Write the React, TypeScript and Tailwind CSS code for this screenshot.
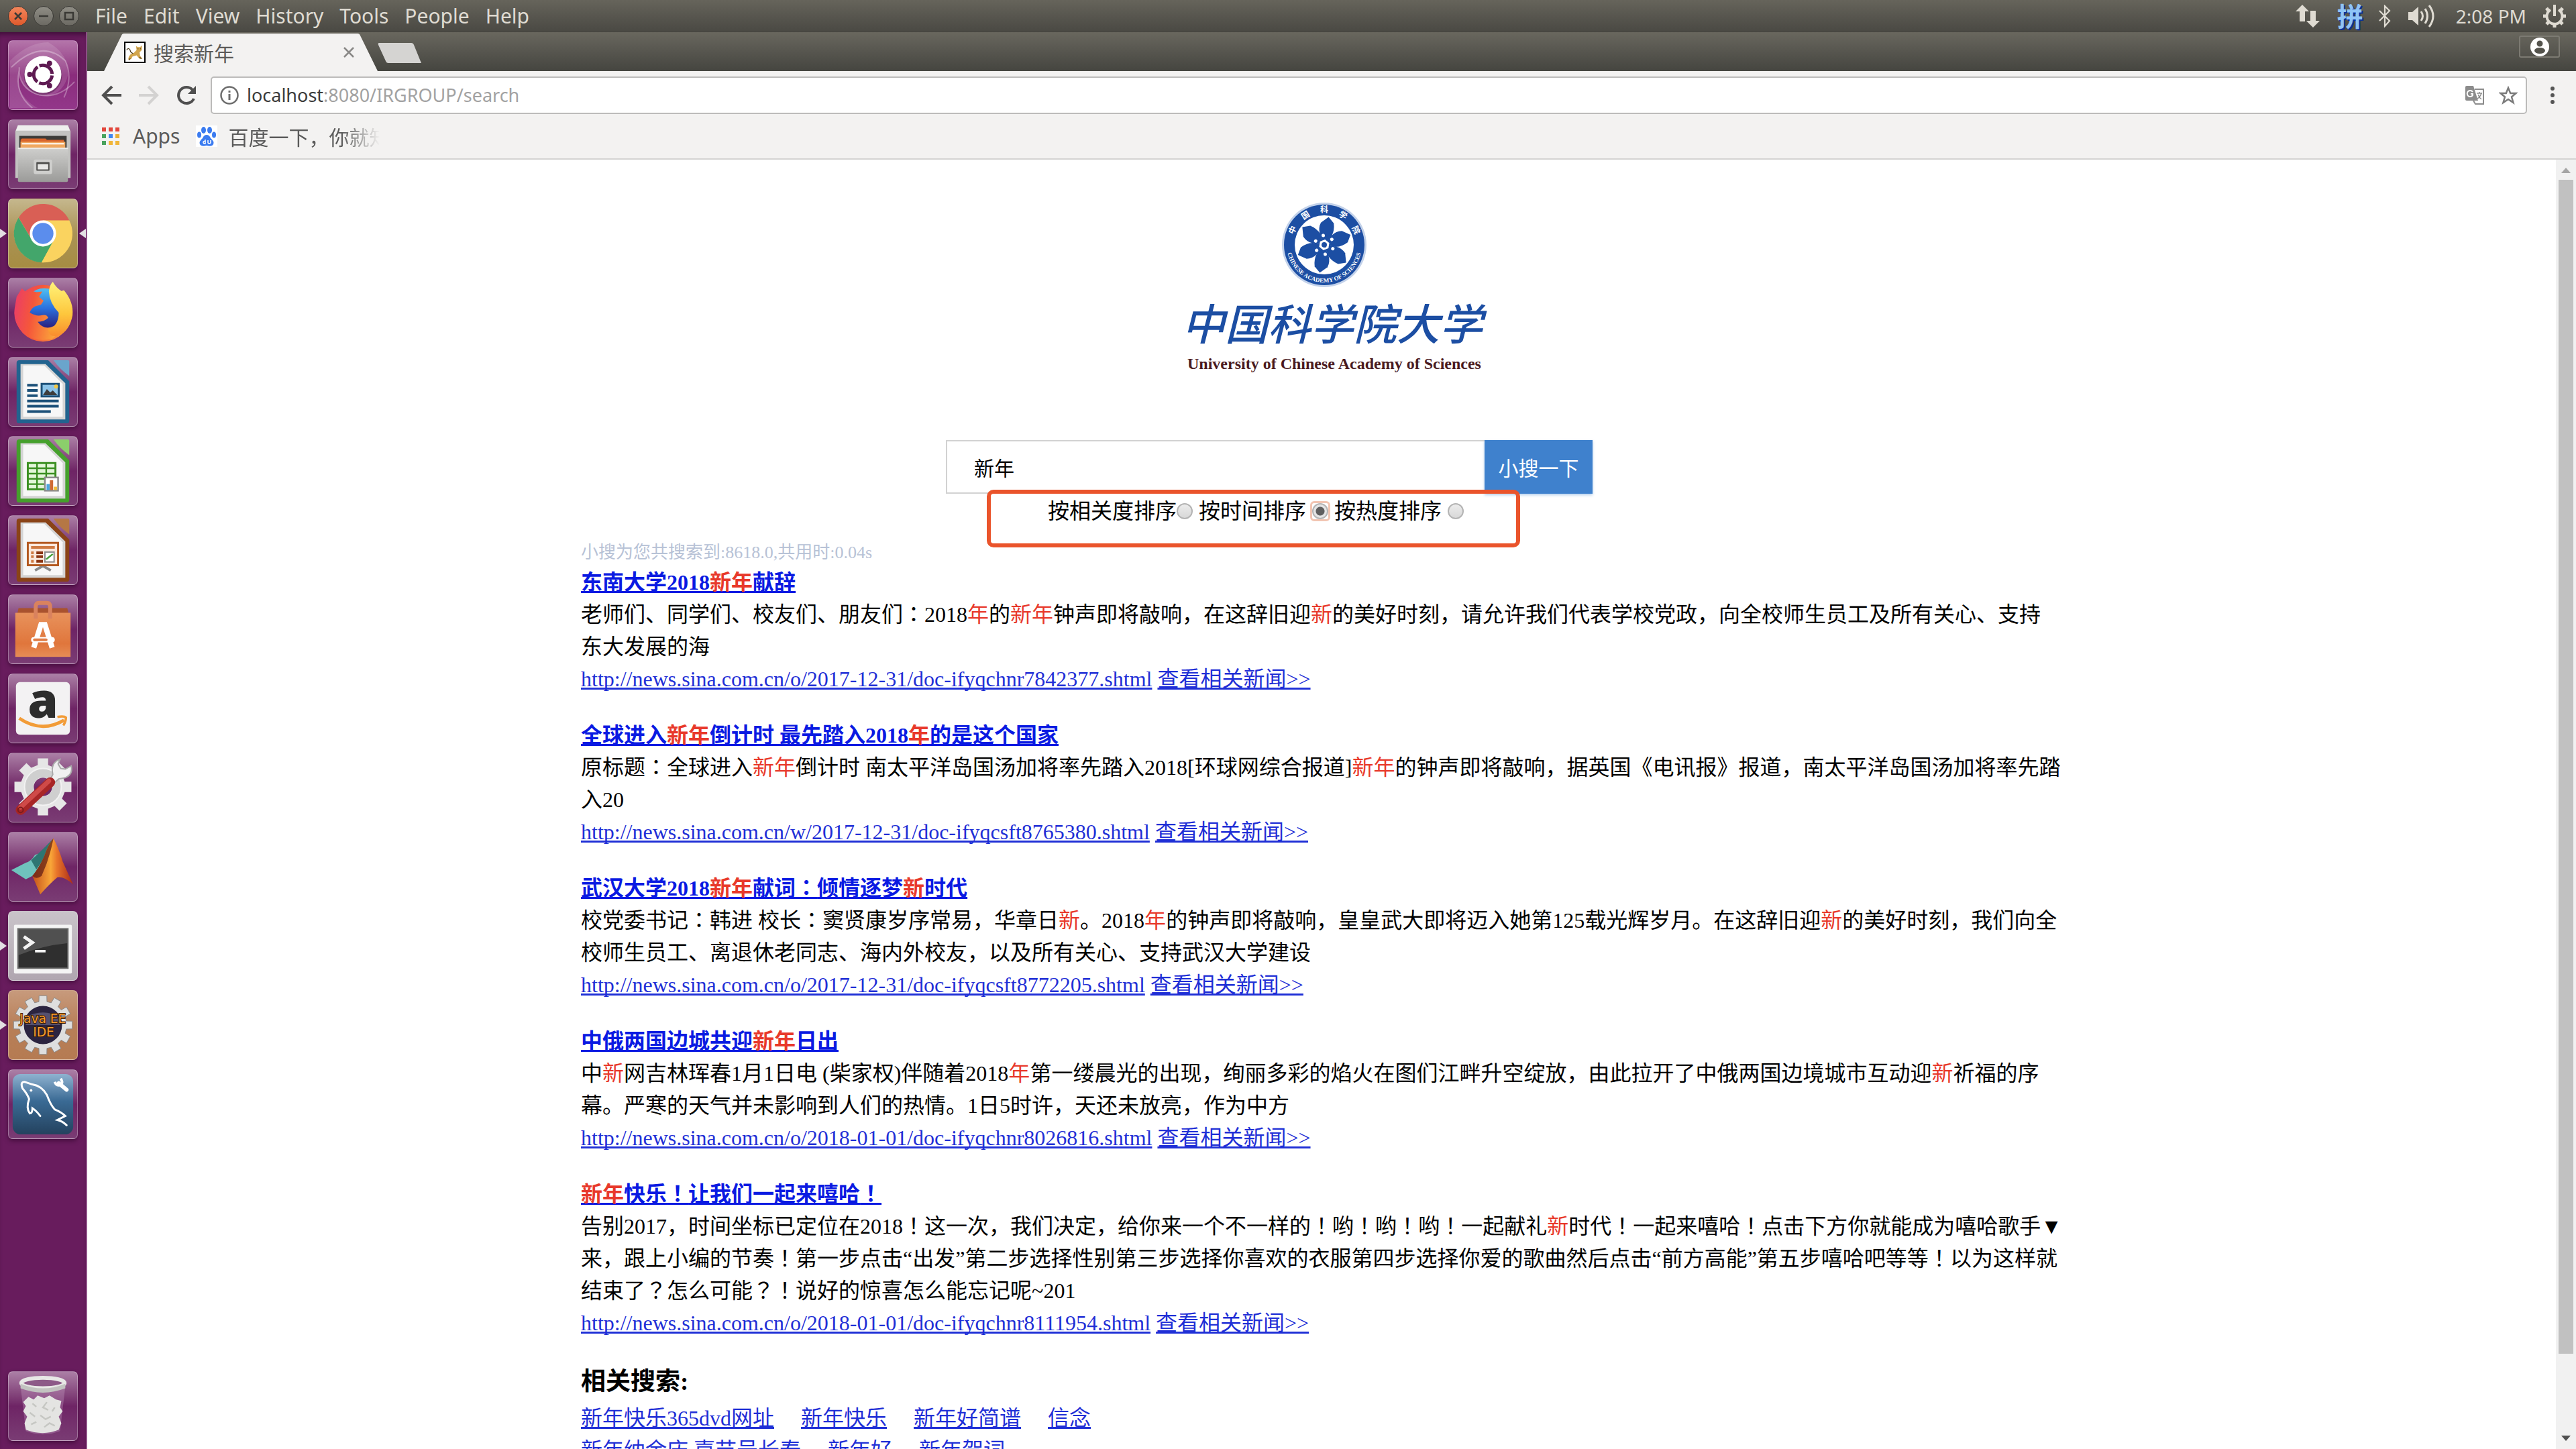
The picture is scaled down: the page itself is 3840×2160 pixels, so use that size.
import React from "react";

/* ---------- data ---------- */

type Result = { title: string; body: string; url: string };

// Words inside braces are the highlighted query terms.
const results: Result[] = [
  {
    title: "东南大学2018{新年}献辞",
    body: "老师们、同学们、校友们、朋友们：2018{年}的{新年}钟声即将敲响，在这辞旧迎{新}的美好时刻，请允许我们代表学校党政，向全校师生员工及所有关心、支持东大发展的海",
    url: "http://news.sina.com.cn/o/2017-12-31/doc-ifyqchnr7842377.shtml",
  },
  {
    title: "全球进入{新年}倒计时 最先踏入2018{年}的是这个国家",
    body: "原标题：全球进入{新年}倒计时 南太平洋岛国汤加将率先踏入2018[环球网综合报道]{新年}的钟声即将敲响，据英国《电讯报》报道，南太平洋岛国汤加将率先踏入20",
    url: "http://news.sina.com.cn/w/2017-12-31/doc-ifyqcsft8765380.shtml",
  },
  {
    title: "武汉大学2018{新年}献词：倾情逐梦{新}时代",
    body: "校党委书记：韩进 校长：窦贤康岁序常易，华章日{新}。2018{年}的钟声即将敲响，皇皇武大即将迈入她第125载光辉岁月。在这辞旧迎{新}的美好时刻，我们向全校师生员工、离退休老同志、海内外校友，以及所有关心、支持武汉大学建设",
    url: "http://news.sina.com.cn/o/2017-12-31/doc-ifyqcsft8772205.shtml",
  },
  {
    title: "中俄两国边城共迎{新年}日出",
    body: "中{新}网吉林珲春1月1日电 (柴家权)伴随着2018{年}第一缕晨光的出现，绚丽多彩的焰火在图们江畔升空绽放，由此拉开了中俄两国边境城市互动迎{新}祈福的序幕。严寒的天气并未影响到人们的热情。1日5时许，天还未放亮，作为中方",
    url: "http://news.sina.com.cn/o/2018-01-01/doc-ifyqchnr8026816.shtml",
  },
  {
    title: "{新年}快乐！让我们一起来嘻哈！",
    body: "告别2017，时间坐标已定位在2018！这一次，我们决定，给你来一个不一样的！哟！哟！哟！一起献礼{新}时代！一起来嘻哈！点击下方你就能成为嘻哈歌手▼来，跟上小编的节奏！第一步点击“出发”第二步选择性别第三步选择你喜欢的衣服第四步选择你爱的歌曲然后点击“前方高能”第五步嘻哈吧等等！以为这样就结束了？怎么可能？！说好的惊喜怎么能忘记呢~201",
    url: "http://news.sina.com.cn/o/2018-01-01/doc-ifyqchnr8111954.shtml",
  },
];

const related = [
  ["新年快乐365dvd网址", "新年快乐", "新年好简谱", "信念"],
  ["新年纳余庆 嘉节号长春", "新年好", "新年贺词"],
];

const menus = ["File", "Edit", "View", "History", "Tools", "People", "Help"];

/* ---------- text helper ---------- */

// Colon, exclamation and question marks sit centred in their cell.
function Rich({ text }: { text: string }) {
  return (
    <>
      {text.split(/(\{[^}]*\}|[：！？]+)/).map((part, i) => {
        if (part.startsWith("{"))
          return (
            <em key={i} className="not-italic text-[#e8392b]">
              {part.slice(1, -1)}
            </em>
          );
        if (/^[：！？]/.test(part))
          return (
            <span key={i} lang="ja" className="font-['Liberation_Serif','Noto_Sans_CJK_JP',serif]">
              {part}
            </span>
          );
        return part;
      })}
    </>
  );
}

/* ---------- launcher icons (104 x 104 tiles) ---------- */

function gearPath(cx: number, cy: number, teeth: number, rOut: number, rIn: number, duty: number) {
  const pts: string[] = [];
  const step = (Math.PI * 2) / teeth;
  for (let i = 0; i < teeth; i++) {
    const a = i * step - Math.PI / 2;
    const w = (step * duty) / 2;
    [
      [a - w * 1.3, rIn],
      [a - w, rOut],
      [a + w, rOut],
      [a + w * 1.3, rIn],
    ].forEach(([t, r]) => pts.push(`${(cx + r * Math.cos(t)).toFixed(1)},${(cy + r * Math.sin(t)).toFixed(1)}`));
  }
  return `M${pts.join("L")}Z`;
}

const DashIcon = (
  <g>
    <path d="M4 40Q50-4 86 30Q98 56 84 86" fill="none" stroke="#fff" strokeOpacity=".3" strokeWidth="2" />
    <path d="M60 2Q92 20 90 52Q84 78 60 84Q30 84 20 62Q12 40 30 24Q12 44 16 70Q22 90 44 102H2V30Q30 2 60 2Z" fill="#fff" fillOpacity=".13" />
    <path d="M100 62Q76 88 46 82Q14 72 16 40M36 102Q8 80 16 44" fill="none" stroke="#fff" strokeOpacity=".3" strokeWidth="2" />
    <circle cx="52" cy="53" r="29" fill="#3c0f36" fillOpacity=".35" />
    <circle cx="52" cy="51" r="28" fill="#fff" />
    <circle cx="52" cy="51" r="14" fill="none" stroke="#5e1a52" strokeWidth="5" strokeDasharray="26.3 3" strokeDashoffset="-1.5" />
    <circle cx="32" cy="51" r="4" fill="#5e1a52" />
    <circle cx="62" cy="34" r="4" fill="#5e1a52" />
    <circle cx="62" cy="68" r="4" fill="#5e1a52" />
  </g>
);

const FilesIcon = (
  <g>
    <path d="M14 8H90L94 17V88H10V17Z" fill="#c3c3c1" />
    <path d="M14 8H90L93 16H11Z" fill="#efefee" />
    <rect x="16" y="24" width="72" height="20" fill="#3c3b38" />
    <path d="M20 28H56L58 30H84V44H18V30Z" fill="#d9652c" />
    <rect x="18" y="33" width="68" height="11" fill="#f0a860" />
    <rect x="20" y="35" width="64" height="2" fill="#fff" />
    <rect x="14" y="42" width="76" height="52" rx="2" fill="url(#silver)" />
    <rect x="14" y="42" width="76" height="2" fill="#ececea" />
    <rect x="38" y="60" width="28" height="22" rx="3" fill="#cfcfcd" />
    <rect x="42" y="64" width="20" height="13" rx="1" fill="#4f4f4d" />
    <rect x="44" y="67" width="16" height="8" fill="#e8e8e6" />
  </g>
);

const ChromeIcon = (
  <g>
    <circle cx="52" cy="52" r="44" fill="#fad35f" />
    <path d="M52 52L92 32A44 44 0 0 0 15 28L33 58Z" fill="#d95f55" />
    <path d="M15 28A44 44 0 0 0 50 96L68 63L52 72L34 60Z" fill="#43a66b" />
    <path d="M52 32H92A44 44 0 0 1 50 96L69 62Z" fill="#fad35f" />
    <circle cx="52" cy="52" r="20" fill="#fff" />
    <circle cx="52" cy="52" r="16" fill="#5b8ded" />
  </g>
);

const FirefoxIcon = (
  <g>
    <circle cx="52" cy="53" r="43" fill="url(#fffox)" />
    <circle cx="54" cy="46" r="31" fill="url(#ffglobe)" />
    <path d="M9 46L12 28L20 15L27 22Q32 17 42 21L51 20L46 28L53 34L49 40L41 42Q34 45 32 52Q42 58 50 56Q58 54 60 60Q54 66 44 66Q54 80 70 72Q80 82 66 92Q36 98 20 80Q6 66 9 46Z" fill="url(#fffox)" />
    <path d="M67 5Q72 14 80 19L84 18Q99 36 97 56Q93 78 78 86Q62 92 60 78Q76 72 76 52Q62 38 61 20Q62 10 67 5Z" fill="url(#fftail)" />
  </g>
);

function OfficeFrame({ dark, light, children }: { dark: string; light: string; children: React.ReactNode }) {
  return (
    <g>
      <path d="M16 4H60L92 36V96Q92 100 88 100H16Q12 100 12 96V8Q12 4 16 4Z" fill={dark} />
      <path d="M68 4H90Q92 4 92 6V28Q78 18 68 4Z" fill={light} />
      <path d="M18 10H56L86 39V94H18Z" fill="#d4d4d4" />
      <path d="M22 12H54L82 40V90H22Z" fill="#f7f7f7" />
      {children}
    </g>
  );
}

const WriterIcon = (
  <OfficeFrame dark="#22638f" light="#6aa5cc">
    <path d="M28 42H44M28 50H44M28 58H44M28 66H76M28 74H76M28 82H64" stroke="#1c5078" strokeWidth="4" />
    <rect x="50" y="40" width="26" height="19" fill="#8cc4e8" stroke="#1c5078" strokeWidth="3" />
    <path d="M52 57L58 48L63 53L67 50L74 57Z" fill="#3d3d3d" />
    <circle cx="72" cy="44" r="3" fill="#f2c844" />
  </OfficeFrame>
);

const CalcIcon = (
  <OfficeFrame dark="#45a02c" light="#8bcf6b">
    <rect x="29" y="40" width="42" height="40" fill="#e2f6d8" stroke="#3b8f22" strokeWidth="3" />
    <path d="M29 48H71M29 56H71M29 64H71M29 72H71M43 40V80M57 40V80" stroke="#3b8f22" strokeWidth="2.5" />
    <rect x="55" y="62" width="20" height="20" fill="#fff" stroke="#8a8a8a" strokeWidth="2.5" />
    <path d="M60 81V72" stroke="#4ba6df" strokeWidth="5" />
    <path d="M65 81V66" stroke="#cf6b34" strokeWidth="5" />
    <path d="M71 81V76" stroke="#f0bd3a" strokeWidth="5" />
  </OfficeFrame>
);

const ImpressIcon = (
  <OfficeFrame dark="#8a4317" light="#b57745">
    <path d="M40 83L52 76L64 83" fill="none" stroke="#8a8a8a" strokeWidth="4" />
    <rect x="29" y="41" width="46" height="34" fill="#fbe9dd" stroke="#b3581f" strokeWidth="3" />
    <path d="M34 48H70" stroke="#cf7a42" strokeWidth="4" />
    <path d="M34 56H38M34 62H38M34 69H38" stroke="#cf7a42" strokeWidth="4" />
    <path d="M42 56H52M42 62H52M42 69H52" stroke="#8a3410" strokeWidth="4" />
    <rect x="55" y="55" width="14" height="15" fill="#fff" stroke="#8a8a8a" strokeWidth="2" />
    <path d="M57 66L62 62L67 58" fill="none" stroke="#47a23a" strokeWidth="2.5" />
  </OfficeFrame>
);

const SoftwareIcon = (
  <g>
    <path d="M15 20H89L91 28H13Z" fill="#a9522e" />
    <rect x="10" y="27" width="84" height="67" fill="url(#bag)" />
    <path d="M41 36V18Q41 12 46 12H58Q63 12 63 18V36" fill="none" stroke="#d9825e" strokeWidth="6" />
    <path d="M38 80L49 45H55L66 80" fill="none" stroke="#fff" strokeWidth="8" />
    <rect x="34" y="64" width="36" height="8" rx="4" fill="#fff" />
    <rect x="37" y="66" width="22" height="4" rx="2" fill="#e07d46" />
  </g>
);

const AmazonIcon = (
  <g>
    <rect x="11" y="12" width="82" height="80" rx="6" fill="#f3f2f3" />
    <text x="52" y="66" textAnchor="middle" fontSize="74" fontWeight="800" fill="#2d2d2d" className="font-['Open_Sans',sans-serif]">
      a
    </text>
    <path d="M16 67Q50 90 84 70" fill="none" stroke="#f29c38" strokeWidth="5" />
    <path d="M74 65Q84 63 87 66Q87 72 83 78" fill="none" stroke="#f29c38" strokeWidth="3.5" />
  </g>
);

const SettingsIcon = (
  <g>
    <path d={`${gearPath(52, 51, 8, 44, 34, 0.46)}M52 37a14 14 0 1 0 .1 0Z`} fill="#e6e6e6" fillRule="evenodd" />
    <circle cx="52" cy="51" r="21" fill="none" stroke="#cfcfcf" strokeWidth="13" />
    <circle cx="52" cy="51" r="28" fill="none" stroke="#f2f2f2" strokeWidth="2" />
    <path d="M62 42L67 32Q63 14 78 9L75 16L79 23L86 24L95 19Q98 32 86 37L76 39L68 46Z" fill="#f0f0f0" stroke="#a9a9a9" strokeWidth="2" />
    <path d="M63 44L18 86" stroke="#a82626" strokeWidth="15" strokeLinecap="round" />
    <path d="M61 42L18 82" stroke="#cf4a48" strokeWidth="7" strokeLinecap="round" />
    <circle cx="18" cy="86" r="4" fill="none" stroke="#7c1c1c" strokeWidth="2" />
  </g>
);

const MatlabIcon = (
  <g>
    <path d="M4 57L26 46Q34 44 40 34Q52 32 68 9L56 38L44 58L36 66L26 71Z" fill="#6fc3bd" />
    <path d="M34 42Q50 28 68 9L52 42L42 56Z" fill="#2e7672" />
    <path d="M36 66Q46 54 54 36Q60 18 68 9Q76 24 82 44Q90 62 98 79Q84 66 74 68Q62 78 48 94Q42 80 36 66Z" fill="url(#matlab)" />
    <path d="M36 66Q46 54 54 36Q60 18 68 9Q62 40 50 66Q42 72 36 66Z" fill="#5c1a12" fillOpacity=".7" />
  </g>
);

const TerminalIcon = (
  <g>
    <rect x="8" y="20" width="88" height="74" rx="2" fill="#f4f4f4" />
    <rect x="14" y="26" width="76" height="60" fill="#2f2f2f" stroke="#6b6b6b" strokeWidth="2" />
    <path d="M15 27H89V48Q50 52 15 66Z" fill="#fff" fillOpacity=".16" />
    <path d="M23 38L36 47L23 56" fill="none" stroke="#f4f4f4" strokeWidth="5" />
    <path d="M40 60H56" stroke="#f4f4f4" strokeWidth="4" />
  </g>
);

const JavaEEIcon = (
  <g>
    <path d={gearPath(52, 52, 12, 45, 36, 0.5)} fill="#dedede" stroke="#8a8a8a" strokeWidth="1" />
    <circle cx="52" cy="52" r="29" fill="#2b2440" />
    <path d="M26 40Q52 26 78 40V52H26Z" fill="#55506e" />
    <g fill="#f29a2e" stroke="#3a1c05" strokeWidth="2" paintOrder="stroke" textAnchor="middle" className="font-['DejaVu_Sans',sans-serif]">
      <text x="52" y="49" fontSize="19">
        Java EE
      </text>
      <text x="53" y="69" fontSize="19">
        IDE
      </text>
    </g>
  </g>
);

const MysqlIcon = (
  <g>
    <rect x="6" y="6" width="92" height="92" rx="12" fill="url(#mysql)" />
    <path d="M21 28Q17 18 24 18Q30 20 36 22Q50 24 58 38Q64 54 70 60Q80 64 86 70L74 76Q82 78 88 84M21 28Q28 36 31 44Q26 58 32 66Q36 66 36 58Q42 62 48 70" fill="none" stroke="#fff" strokeWidth="3" strokeLinecap="round" />
    <circle cx="34" cy="31" r="2" fill="#fff" />
    <path d="M76 20L88 30" stroke="#fff" strokeWidth="6" strokeLinecap="round" />
    <path d="M79 13Q84 21 77 23Q72 24 70 18" fill="none" stroke="#fff" strokeWidth="4" />
  </g>
);

const TrashIcon = (
  <g>
    <path d="M18 22L26 90Q52 100 78 90L86 22Z" fill="#d9b8d6" fillOpacity=".28" />
    <path d="M22 46L30 38L38 42L44 36L54 40L62 36L72 42L80 44L78 54L82 60L76 68L80 78L76 88Q52 98 26 88L24 78L28 68L22 60L26 52Z" fill="#e4e4e2" />
    <path d="M36 48L42 53M58 46L52 54L60 58M70 54L66 60M32 62L40 68M48 66L56 72L64 68M34 80L42 76M54 84L62 78L70 82" fill="none" stroke="#c6c7c3" strokeWidth="2.5" />
    <ellipse cx="52" cy="17" rx="33" ry="8" fill="#8d5a88" stroke="#e8e8e6" strokeWidth="6" />
    <path d="M18 18V25Q52 38 86 25V18Q52 32 18 18Z" fill="#c2c3c0" />
  </g>
);

type App = { name: string; icon: React.ReactNode; tile: string; pip?: boolean; active?: boolean };

const plainTile = "bg-linear-to-b from-[#ab7fa6] via-[#6e2465] to-[#7a3c74]";

const apps: App[] = [
  { name: "Dash", icon: DashIcon, tile: "bg-linear-to-b from-[#b475aa] via-[#8a2c7c] to-[#93378a]" },
  { name: "Files", icon: FilesIcon, tile: plainTile },
  { name: "Google Chrome", icon: ChromeIcon, tile: "bg-linear-to-b from-[#c5b78d] via-[#aa9355] to-[#a68c42]", pip: true, active: true },
  { name: "Firefox", icon: FirefoxIcon, tile: plainTile },
  { name: "LibreOffice Writer", icon: WriterIcon, tile: plainTile },
  { name: "LibreOffice Calc", icon: CalcIcon, tile: plainTile },
  { name: "LibreOffice Impress", icon: ImpressIcon, tile: plainTile },
  { name: "Ubuntu Software", icon: SoftwareIcon, tile: plainTile },
  { name: "Amazon", icon: AmazonIcon, tile: plainTile },
  { name: "System Settings", icon: SettingsIcon, tile: plainTile },
  { name: "MATLAB", icon: MatlabIcon, tile: plainTile },
  { name: "Terminal", icon: TerminalIcon, tile: "bg-linear-to-b from-[#c9c3c9] via-[#bdb5bd] to-[#b0a6b0]", pip: true },
  { name: "Java EE IDE", icon: JavaEEIcon, tile: "bg-linear-to-b from-[#c79a7c] via-[#b87f58] to-[#b57b52]", pip: true },
  { name: "MySQL Workbench", icon: MysqlIcon, tile: plainTile },
];

function Tile({ app }: { app: App }) {
  return (
    <div className="relative flex w-full shrink-0 pl-3">
      {app.pip && (
        <svg viewBox="0 0 10 14" className="absolute left-0 top-[45px] h-[14px] w-[10px]" aria-hidden="true">
          <path d="M0 0L10 7L0 14Z" fill="#e3dfe3" />
        </svg>
      )}
      <button
        type="button"
        aria-label={app.name}
        className={`size-[104px] overflow-hidden rounded-[7px] border border-white/30 shadow-[0_3px_6px_rgba(40,0,35,0.5)] ${app.tile}`}
      >
        <svg viewBox="0 0 104 104" className="size-full" aria-hidden="true">
          {app.icon}
        </svg>
      </button>
      {app.active && (
        <svg viewBox="0 0 10 14" className="absolute right-0 top-[45px] h-[14px] w-[10px]" aria-hidden="true">
          <path d="M10 0L0 7L10 14Z" fill="#e3dfe3" />
        </svg>
      )}
    </div>
  );
}

function Gradients() {
  return (
    <svg className="absolute size-0" aria-hidden="true">
      <defs>
        <linearGradient id="silver" x1="0" y1="0" x2="0" y2="1">
          <stop offset="0" stopColor="#cfcfcd" />
          <stop offset="1" stopColor="#9b9b99" />
        </linearGradient>
        <linearGradient id="ffglobe" x1="0" y1="0" x2="0" y2="1">
          <stop offset="0" stopColor="#4fc0f2" />
          <stop offset=".5" stopColor="#2a6fdc" />
          <stop offset="1" stopColor="#2b1a78" />
        </linearGradient>
        <linearGradient id="fffox" x1="0" y1=".4" x2="1" y2=".6">
          <stop offset="0" stopColor="#ec3f63" />
          <stop offset=".4" stopColor="#f5573a" />
          <stop offset="1" stopColor="#fba63a" />
        </linearGradient>
        <linearGradient id="fftail" x1="0" y1="0" x2="0" y2="1">
          <stop offset="0" stopColor="#fff37a" />
          <stop offset=".6" stopColor="#fdc63c" />
          <stop offset="1" stopColor="#f98c2e" />
        </linearGradient>
        <linearGradient id="bag" x1="0" y1="0" x2="0" y2="1">
          <stop offset="0" stopColor="#e8925c" />
          <stop offset=".7" stopColor="#e0763c" />
          <stop offset="1" stopColor="#e68c56" />
        </linearGradient>
        <linearGradient id="matlab" x1="0" y1="0" x2="1" y2="0">
          <stop offset="0" stopColor="#c4501c" />
          <stop offset=".45" stopColor="#f8a638" />
          <stop offset=".6" stopColor="#e8752a" />
          <stop offset="1" stopColor="#a82818" />
        </linearGradient>
        <linearGradient id="mysql" x1="0" y1="0" x2="0" y2="1">
          <stop offset="0" stopColor="#8fb2d0" />
          <stop offset=".45" stopColor="#3a6a94" />
          <stop offset="1" stopColor="#24425e" />
        </linearGradient>
      </defs>
    </svg>
  );
}

function Launcher() {
  return (
    <nav
      aria-label="Launcher"
      className="flex w-[130px] shrink-0 flex-col gap-[14px] border-r-2 border-[#8d4f86] bg-[#681c5d] pb-3 pt-3 shadow-[inset_0_8px_10px_-6px_rgba(30,0,28,0.7)]"
    >
      {apps.map((a) => (
        <Tile key={a.name} app={a} />
      ))}
      <div className="mt-auto">
        <Tile app={{ name: "Trash", icon: TrashIcon, tile: plainTile }} />
      </div>
    </nav>
  );
}

/* ---------- top bar ---------- */

function WindowButton({ label, className, d }: { label: string; className: string; d: string }) {
  return (
    <button type="button" aria-label={label} className={`size-[30px] rounded-full border border-[#3b3a36] ${className}`}>
      <svg viewBox="0 0 28 28" className="size-full" aria-hidden="true">
        <path d={d} fill="none" stroke="#3a3935" strokeWidth="2.5" />
      </svg>
    </button>
  );
}

function TopBar() {
  return (
    <header className="flex h-12 shrink-0 items-center border-b border-[#45443f] bg-linear-to-b from-[#66645b] to-[#4a4943] pl-3 pr-[14px] text-[#dfdbd2] font-['Noto_Sans',sans-serif]">
      <div className="flex gap-2">
        <WindowButton label="Close window" className="bg-linear-to-b from-[#f2865b] to-[#e0592b]" d="M9 9L19 19M19 9L9 19" />
        <WindowButton label="Minimize window" className="bg-linear-to-b from-[#8f8d85] to-[#6c6a63]" d="M7 14H21" />
        <WindowButton label="Restore window" className="bg-linear-to-b from-[#8f8d85] to-[#6c6a63]" d="M8 9H20V19H8Z" />
      </div>
      <div className="ml-6 flex gap-6 text-[30px] leading-[40px]">
        {menus.map((m) => (
          <button key={m} type="button">
            {m}
          </button>
        ))}
      </div>
      <div className="ml-auto flex items-center">
        <svg viewBox="0 0 36 36" className="size-9" aria-label="Network" fill="#dfdbd2">
          <path d="M10 1L20 11H14V26H6V11H0Z" />
          <path d="M26 35L36 25H30V10H22V25H16Z" />
        </svg>
        <span className="mb-1 ml-[26px] text-[39px] font-bold leading-[40px] text-[#8fc4f7] [text-shadow:2px_2px_0_#0b2f9a] font-['Noto_Sans_CJK_SC',sans-serif]">
          拼
        </span>
        <svg viewBox="0 0 18 34" className="ml-[23px] h-[34px] w-[18px]" aria-label="Bluetooth" fill="none" stroke="#dfdbd2" strokeWidth="2.2">
          <path d="M1 9L16 24L9 32V2L16 9L1 24" />
        </svg>
        <svg viewBox="0 0 41 36" className="ml-[26px] h-9 w-[41px]" aria-label="Volume" fill="none" stroke="#dfdbd2" strokeWidth="3">
          <path d="M0 12H6L15 4V32L6 24H0Z" fill="#dfdbd2" stroke="none" />
          <path d="M19 11Q24 18 19 25M25 7Q32 18 25 29M31 2Q43 18 31 34" />
        </svg>
        <span className="ml-[30px] text-[28px] leading-[40px]">2:08 PM</span>
        <svg viewBox="0 0 36 36" className="ml-[24px] size-9" aria-label="System" fill="none" stroke="#dfdbd2">
          <path d="M12 8.500A11.500 11.500 0 1 0 24 8.500" strokeWidth="4" />
          <path d="M18 1V18" strokeWidth="4" />
          <path d="M7 18H1M35 18H29M10 26L6 30M26 26L30 30M18 30V35M9 10L6 6M27 10L30 6" strokeWidth="5" />
        </svg>
      </div>
    </header>
  );
}

/* ---------- browser chrome ---------- */

function CatFavicon() {
  return (
    <svg viewBox="0 0 32 32" className="size-8 border-2 border-black bg-white" aria-hidden="true">
      <path d="M5 26Q7 18 14 17L19 12L18 5L21 7H25L28 4L28 12L24 16L25 22L29 27H24L19 21L12 23L10 27L5 29Z" fill="#d2a54c" />
      <path d="M2 12Q5 7 8 12Q8 16 13 18M8 26L7 29M24 24L27 27M21 10H22M25 10H26" stroke="#4a3a1c" strokeWidth="1.500" fill="none" />
    </svg>
  );
}

function TabStrip() {
  return (
    <div className="flex h-[58px] shrink-0 items-end justify-between bg-linear-to-b from-[#69675e] to-[#454540] pl-[25px] pr-6">
      <div className="flex items-end">
        <div className="relative flex h-14 w-[408px] items-center pl-[30px] pr-[34px]">
          <svg viewBox="0 0 408 56" className="absolute inset-0 size-full" aria-hidden="true">
            <path d="M0 56L26 3Q27 0 30 0H378Q381 0 382 3L408 56Z" fill="#f3f2f1" />
          </svg>
          <span className="relative flex min-w-0 flex-1 items-center gap-3">
            <CatFavicon />
            <span className="text-[30px] leading-10 text-[#5c5b59] font-['Noto_Sans_CJK_SC',sans-serif]">搜索新年</span>
          </span>
          <button type="button" aria-label="Close tab" className="relative">
            <svg viewBox="0 0 18 18" className="size-[18px]" aria-hidden="true">
              <path d="M2 2L16 16M16 2L2 16" stroke="#8a8987" strokeWidth="2.500" />
            </svg>
          </button>
        </div>
        <button type="button" aria-label="New tab" className="mb-3">
          <svg viewBox="0 0 66 30" className="h-[30px] w-[66px]" aria-hidden="true">
            <path d="M2 0H50Q53 0 54 3L65 30H16Q13 30 12 27L1 3Q0 0 2 0Z" fill="#d5d4d2" />
          </svg>
        </button>
      </div>
      <button type="button" aria-label="Profile" className="mb-5 flex h-[33px] w-[61px] items-center justify-center rounded-[3px] border-2 border-[#7c7a72]">
        <svg viewBox="0 0 28 28" className="size-[28px]" aria-hidden="true">
          <circle cx="14" cy="14" r="14" fill="#fff" />
          <circle cx="14" cy="9" r="4.500" fill="#54534c" />
          <ellipse cx="14" cy="19.500" rx="8" ry="4.500" fill="#54534c" />
        </svg>
      </button>
    </div>
  );
}

function Toolbar() {
  return (
    <div className="flex shrink-0 items-center pl-[21px] pr-[25px] pt-2">
      <div className="flex items-center gap-[26px]">
        <button type="button" aria-label="Back">
          <svg viewBox="0 0 30 30" className="size-[30px]" fill="none" stroke="#4f4f4f" strokeWidth="4" aria-hidden="true">
            <path d="M30 15H3M16 2L3 15L16 28" />
          </svg>
        </button>
        <button type="button" aria-label="Forward" disabled>
          <svg viewBox="0 0 30 30" className="size-[30px]" fill="none" stroke="#d3d2d1" strokeWidth="4" aria-hidden="true">
            <path d="M0 15H27M14 2L27 15L14 28" />
          </svg>
        </button>
        <button type="button" aria-label="Reload">
          <svg viewBox="0 0 30 30" className="size-[30px]" aria-hidden="true">
            <path d="M26 20A12 12 0 1 1 24 7" fill="none" stroke="#4f4f4f" strokeWidth="4" />
            <path d="M29 1V13H17Z" fill="#4f4f4f" />
          </svg>
        </button>
      </div>
      <div className="ml-[21px] flex h-14 min-w-0 flex-1 items-center rounded-[5px] border-2 border-[#bcbbba] bg-white pl-3 pr-3 text-[27px] leading-10 text-[#a2a2a2] font-['Noto_Sans',sans-serif]">
        <svg viewBox="0 0 28 28" className="size-7 shrink-0" aria-hidden="true">
          <circle cx="14" cy="14" r="12.500" fill="none" stroke="#6d6d6d" strokeWidth="2.500" />
          <path d="M14 12V21M14 7V10" stroke="#6d6d6d" strokeWidth="3" />
        </svg>
        <label htmlFor="address" className="ml-3 text-[#3b3b3b]">
          localhost
        </label>
        <input id="address" type="text" defaultValue=":8080/IRGROUP/search" className="min-w-0 flex-1 bg-transparent outline-none" />
        <button type="button" aria-label="Translate" className="mr-[22px]">
          <svg viewBox="0 0 28 28" className="size-7" aria-hidden="true">
            <path d="M14 5H27V27H15L12 22" fill="#fff" stroke="#8c8c8c" strokeWidth="2" />
            <path d="M2 0H12L19 22H2Q0 22 0 20V2Q0 0 2 0Z" fill="#8c8c8c" />
            <path d="M11 9A4.500 4.500 0 1 0 11 14V12H8" fill="none" stroke="#fff" strokeWidth="2" />
            <path d="M17 11H25M21 9V11M24 11Q22 17 18 19M19 13Q21 18 24 20" fill="none" stroke="#8c8c8c" strokeWidth="1.500" />
          </svg>
        </button>
        <button type="button" aria-label="Bookmark this page">
          <svg viewBox="0 0 28 28" className="size-7" aria-hidden="true">
            <path d="M14 3L17.200 11H25.500L19 16.500L21.500 25L14 20L6.500 25L9 16.500L2.500 11H10.800Z" fill="none" stroke="#7a7a7a" strokeWidth="2.500" />
          </svg>
        </button>
      </div>
      <button type="button" aria-label="Menu" className="ml-[28px]">
        <svg viewBox="0 0 20 28" className="h-7 w-5" fill="#545454" aria-hidden="true">
          <circle cx="10" cy="4" r="3" />
          <circle cx="10" cy="14" r="3" />
          <circle cx="10" cy="24" r="3" />
        </svg>
      </button>
    </div>
  );
}

const appDots = ["#e2473c", "#e2473c", "#e2473c", "#4aa35e", "#3f86f0", "#e9ae35", "#4aa35e", "#f0b63a", "#f0b63a"];

function BookmarksBar() {
  return (
    <div className="flex h-[68px] shrink-0 items-center border-b-2 border-[#d4d3d2] pl-[22px] text-[#5a5a5a]">
      <a href="#apps" className="flex items-center">
        <span className="grid grid-cols-3 gap-1">
          {appDots.map((c, i) => (
            <span key={i} className="size-[6px]" style={{ backgroundColor: c }} />
          ))}
        </span>
        <span className="ml-5 text-[30px] leading-10 font-['Noto_Sans',sans-serif]">Apps</span>
      </a>
      <a href="#baidu" className="ml-6 flex items-center">
        <svg viewBox="0 0 32 32" className="size-8 bg-white" fill="#3a7bf0" aria-hidden="true">
          <ellipse cx="11.500" cy="7" rx="3.500" ry="5" />
          <ellipse cx="20.500" cy="7" rx="3.500" ry="5" />
          <ellipse cx="5" cy="14" rx="3" ry="4.500" />
          <ellipse cx="27" cy="14" rx="3" ry="4.500" />
          <path d="M16 14Q20 14 22 19Q28 24 26 28Q24 32 16 30Q8 32 6 28Q4 24 10 19Q12 14 16 14Z" />
          <path d="M14 21V27H12Q9 24 14 23M18 22V26Q20 28 22 26V22" fill="none" stroke="#fff" strokeWidth="1.500" />
        </svg>
        <span className="ml-4 w-[226px] overflow-hidden whitespace-nowrap text-[30px] leading-10 font-['Noto_Sans_CJK_SC',sans-serif] [mask-image:linear-gradient(to_right,black_75%,transparent_100%)]">
          百度一下，你就知
        </span>
      </a>
    </div>
  );
}

/* ---------- page ---------- */

function UniversityLogo() {
  return (
    <svg viewBox="0 0 500 300" className="h-[300px] w-[500px]" role="img" aria-label="中国科学院大学 University of Chinese Academy of Sciences">
      <defs>
        <path id="ring-top" d="M206 75A48 48 0 0 1 302 75" />
        <path id="ring-bottom" d="M198 75A56 56 0 0 0 310 75" />
      </defs>
      <circle cx="254" cy="75" r="63" fill="#c3d2ea" />
      <circle cx="254" cy="75" r="60" fill="#1c4ea3" />
      <circle cx="254" cy="75" r="44" fill="#fff" />
      <g transform="translate(254 75) rotate(9)" fill="#1c4ea3">
        {[0, 60, 120, 180, 240, 300].map((a) => (
          <path key={a} d="M0 0L-9 -15Q-13 -24 -10 -32L0 -42L9 -34Q12 -24 9 -15Z" transform={`rotate(${a})`} />
        ))}
        <path d="M0 -8L7 -4V4L0 8L-7 4V-4Z" fill="#fff" />
        <circle r="4" />
        {[0, 60, 120, 180, 240, 300].map((a) => (
          <circle key={a} cx="0" cy="-14" r="2.500" fill="#fff" transform={`rotate(${a - 15})`} />
        ))}
      </g>
      <g fill="#fff" fontSize="12" fontWeight="700" textAnchor="middle">
        {[..."中国科学院"].map((c, i) => (
          <text key={c} fontSize="12" className="font-['Noto_Sans_CJK_SC',sans-serif]">
            <textPath href="#ring-top" startOffset={`${14 + i * 18}%`}>
              {c}
            </textPath>
          </text>
        ))}
        <text fontSize="9" className="font-['Liberation_Serif',serif]">
          <textPath href="#ring-bottom" startOffset="50%">
            CHINESE ACADEMY OF SCIENCES
          </textPath>
        </text>
      </g>
      <text x="266" y="217" textAnchor="middle" fontSize="64" fontWeight="500" fontStyle="italic" fill="#1c4ea3" className="font-['Noto_Sans_CJK_SC',sans-serif]">
        中国科学院大学
      </text>
      <text x="269" y="260" textAnchor="middle" fontSize="24" fontWeight="700" fill="#4a1a1e" className="font-['Liberation_Serif',serif]">
        University of Chinese Academy of Sciences
      </text>
    </svg>
  );
}

function SortOption({ id, label, tight, checked }: { id: string; label: string; tight?: boolean; checked?: boolean }) {
  return (
    <span className={tight ? "flex items-center" : "flex items-center gap-[9px]"}>
      <label htmlFor={id}>{label}</label>
      <span className="flex rounded-[3px] has-checked:outline-3 has-checked:outline-[#f2c5b2]">
        <input
          id={id}
          type="radio"
          name="sort"
          defaultChecked={checked}
          className="size-6 appearance-none rounded-full border-2 border-[#b4b4b4] bg-linear-to-b from-[#ececec] to-[#d8d8d8] checked:bg-[radial-gradient(circle,#5f5f5f_0_6px,#e4e4e4_7px)]"
        />
      </span>
    </span>
  );
}

function SearchForm() {
  return (
    <form className="ml-[544px]" onSubmit={(e) => e.preventDefault()}>
      <div className="flex font-['Noto_Sans_CJK_SC',sans-serif] text-[30px]">
        <input
          type="text"
          aria-label="搜索"
          defaultValue="新年"
          className="h-20 w-[803px] border-2 border-r-0 border-[#d2d2d2] bg-white pl-10 text-black outline-none"
        />
        <button type="submit" className="h-20 w-[161px] bg-[#3f81cd] text-white shadow-[0_2px_4px_rgba(63,129,205,0.4)]">
          小搜一下
        </button>
      </div>
      <fieldset
        aria-label="排序"
        className="relative ml-[61px] -mt-[6px] flex h-[86px] w-[795px] items-start gap-[9px] rounded-[10px] border-[6px] border-[#ea542b] pl-[85px] pt-[2px] text-[32px] leading-[48px] text-black"
      >
        <SortOption id="by-relevance" label="按相关度排序" tight />
        <SortOption id="by-time" label="按时间排序" checked />
        <SortOption id="by-heat" label="按热度排序" />
      </fieldset>
    </form>
  );
}

const linkClass = "text-[#1f2fd6] underline [text-decoration-skip-ink:none]";

function Page() {
  return (
    <main className="min-w-0 flex-1 overflow-hidden bg-white text-black font-['Liberation_Serif','Noto_Sans_CJK_SC',serif]">
      <div className="mx-auto w-[60%]">
        <div className="flex justify-center pb-[66px] pt-[52px]">
          <UniversityLogo />
        </div>
        <SearchForm />
        <p className="-mt-3 text-[26px] leading-[40px] text-[#b7c2d6]">小搜为您共搜索到:8618.0,共用时:0.04s</p>
        {results.map((r) => (
          <article key={r.url} className="mb-9 text-[32px] leading-[48px]">
            <h2>
              <a href={r.url} className="font-bold text-[#0a1ae2] underline [text-decoration-skip-ink:none]">
                <Rich text={r.title} />
              </a>
            </h2>
            <p>
              <Rich text={r.body} />
            </p>
            <p>
              <a href={r.url} className={linkClass}>
                {r.url}
              </a>{" "}
              <a href="#related" className={linkClass}>
                查看相关新闻&gt;&gt;
              </a>
            </p>
          </article>
        ))}
        <h3 id="related" className="mb-[2px] text-[37px] font-bold leading-[56px]">
          相关搜索:
        </h3>
        {related.map((row) => (
          <div key={row[0]} className="flex gap-10 text-[32px] leading-[48px]">
            {row.map((t) => (
              <a key={t} href="#search" className={linkClass}>
                {t}
              </a>
            ))}
          </div>
        ))}
      </div>
    </main>
  );
}

function Scrollbar() {
  return (
    <div className="flex w-[30px] shrink-0 flex-col items-center justify-between bg-[#f1f1f1] py-3" aria-hidden="true">
      <svg viewBox="0 0 14 8" className="h-2 w-[14px] shrink-0">
        <path d="M7 0L14 8H0Z" fill="#a5a5a5" />
      </svg>
      <div className="my-[10px] flex w-[22px] flex-1 flex-col">
        <div className="h-[94%] bg-[#c1c1c1]" />
      </div>
      <svg viewBox="0 0 14 8" className="h-2 w-[14px] shrink-0">
        <path d="M7 8L14 0H0Z" fill="#505050" />
      </svg>
    </div>
  );
}

export default function App() {
  return (
    <div className="flex h-screen flex-col overflow-hidden">
      <Gradients />
      <TopBar />
      <div className="flex min-h-0 flex-1">
        <Launcher />
        <div className="flex min-w-0 flex-1 flex-col bg-[#f3f2f1]">
          <TabStrip />
          <Toolbar />
          <BookmarksBar />
          <div className="flex min-h-0 flex-1">
            <Page />
            <Scrollbar />
          </div>
        </div>
      </div>
    </div>
  );
}
